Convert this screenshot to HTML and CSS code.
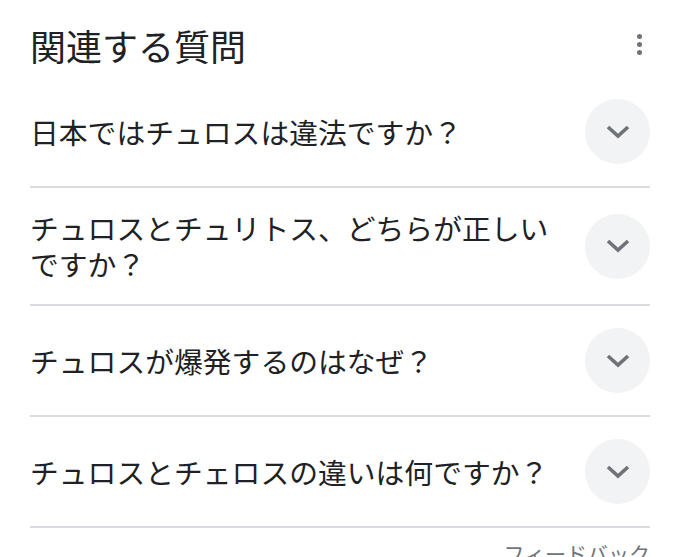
FILE: index.html
```html
<!DOCTYPE html>
<html lang="ja">

<head>
  <meta charset="UTF-8">
  <title>関連する質問</title>
  <link rel="stylesheet" href="styles.css">
</head>

<body>

  <div class="related">

    <div class="related__head">
      <h2 class="related__title">関連する質問</h2>
      <span class="more">
        <i></i><i></i><i></i>
      </span>
    </div>

    <div class="question">
      <div class="question__text">日本ではチュロスは違法ですか？</div>
      <span class="toggle">
        <svg width="26" height="16" viewBox="0 0 26 16"><path d="M3 3 L13 12 L23 3" fill="none" stroke="#6f7378" stroke-width="3.6" /></svg>
      </span>
    </div>

    <div class="question">
      <div class="question__text">チュロスとチュリトス、どちらが正しいですか？</div>
      <span class="toggle">
        <svg width="26" height="16" viewBox="0 0 26 16"><path d="M3 3 L13 12 L23 3" fill="none" stroke="#6f7378" stroke-width="3.6" /></svg>
      </span>
    </div>

    <div class="question">
      <div class="question__text">チュロスが爆発するのはなぜ？</div>
      <span class="toggle">
        <svg width="26" height="16" viewBox="0 0 26 16"><path d="M3 3 L13 12 L23 3" fill="none" stroke="#6f7378" stroke-width="3.6" /></svg>
      </span>
    </div>

    <div class="question">
      <div class="question__text">チュロスとチェロスの違いは何ですか？</div>
      <span class="toggle">
        <svg width="26" height="16" viewBox="0 0 26 16"><path d="M3 3 L13 12 L23 3" fill="none" stroke="#6f7378" stroke-width="3.6" /></svg>
      </span>
    </div>

    <div class="feedback">フィードバック</div>

  </div>

</body>

</html>
```

FILE: styles.css
```css
body {
  margin: 0;
  background-color: #ffffff;
  font-family: "Noto Sans CJK JP", "Noto Sans", sans-serif;
  color: #202124;
}

.related {
  padding: 0 30px;
}

.related__head {
  display: flex;
  justify-content: space-between;
  align-items: center;
  height: 77px;
  padding-top: 12px;
  box-sizing: border-box;
}

.related__title {
  margin: 0;
  font-size: 36px;
  font-weight: 400;
  line-height: 42px;
}

.more {
  display: flex;
  flex-direction: column;
  gap: 3px;
  padding-right: 8px;
}

.more i {
  width: 5px;
  height: 5px;
  border-radius: 50%;
  background-color: #6f7378;
}

.question {
  display: flex;
  align-items: center;
  gap: 24px;
  min-height: 110px;
  padding: 22px 0;
  box-sizing: border-box;
  border-bottom: 2px solid #dadce0;
}

.question__text {
  flex: 1;
  font-size: 28.8px;
  line-height: 36px;
}

.toggle {
  flex: none;
  display: flex;
  justify-content: center;
  align-items: center;
  width: 65px;
  height: 65px;
  border-radius: 50%;
  background-color: #f1f3f4;
}

.feedback {
  text-align: right;
  padding-top: 10px;
  font-size: 21px;
  color: #70757a;
}
```
